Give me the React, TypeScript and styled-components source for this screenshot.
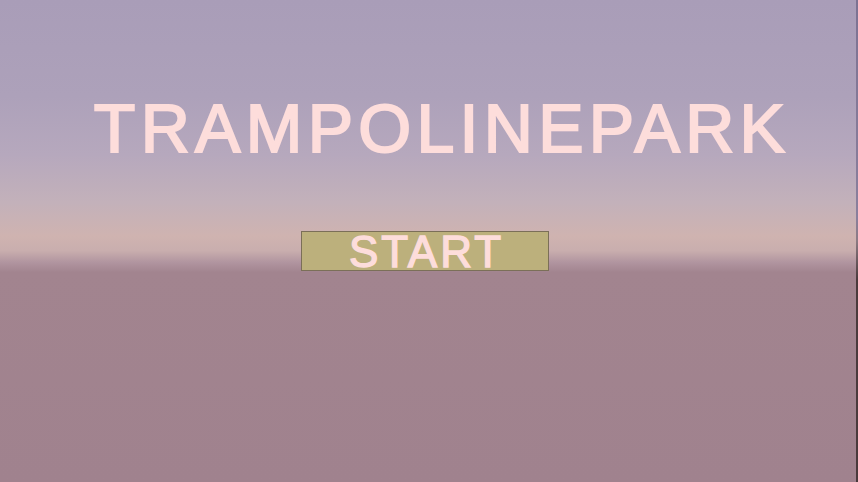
import styled, { createGlobalStyle } from 'styled-components'

const GlobalStyle = createGlobalStyle`
  html, body {
    margin: 0;
    padding: 0;
    overflow: hidden;
  }
  body {
    font-family: "Liberation Sans", Arial, sans-serif;
  }
`

// sky fades from lavender to a peach horizon, then the flat mauve floor
const Scene = styled.div`
  width: 858px;
  height: 482px;
  display: flex;
  flex-direction: column;
  align-items: center;
  background:
    linear-gradient(to bottom, #7c7292 0%, #8a7f9c 45%, #8c7a82 50%, #4a3a3c 58%, #4a3a3c 100%) right top / 2px 100% no-repeat,
    linear-gradient(
      to bottom,
      #a99db8 0%,
      #ada1ba 20%,
      #b6a8bd 32%,
      #c3b1ba 42%,
      #cfb3b0 49%,
      #c9aeae 52%,
      #b0949f 54.5%,
      #a2848f 56.5%,
      #a0828e 100%
    );
`

const Title = styled.h1`
  margin: 93px 0 0 0;
  padding-left: 26px;
  font-size: 68px;
  line-height: 70px;
  font-weight: 400;
  letter-spacing: 5.3px;
  color: #fddddb;
  -webkit-text-stroke: 2px #fddddb;
`

const StartButton = styled.button`
  margin: 68px 8px 0 0;
  width: 248px;
  height: 40px;
  padding: 0;
  box-sizing: border-box;
  border: 1px solid #7b6f58;
  background: #bcb07c;
  color: #fddddb;
  -webkit-text-stroke: 1.4px #fddddb;
  font-family: "Liberation Sans", Arial, sans-serif;
  font-size: 44px;
  font-weight: 400;
  line-height: 39px;
  letter-spacing: 3px;
  text-indent: 3px;
  cursor: pointer;
`

export default function App() {
  return (
    <>
      <GlobalStyle />
      <Scene>
        <Title>TRAMPOLINEPARK</Title>
        <StartButton>START</StartButton>
      </Scene>
    </>
  )
}
